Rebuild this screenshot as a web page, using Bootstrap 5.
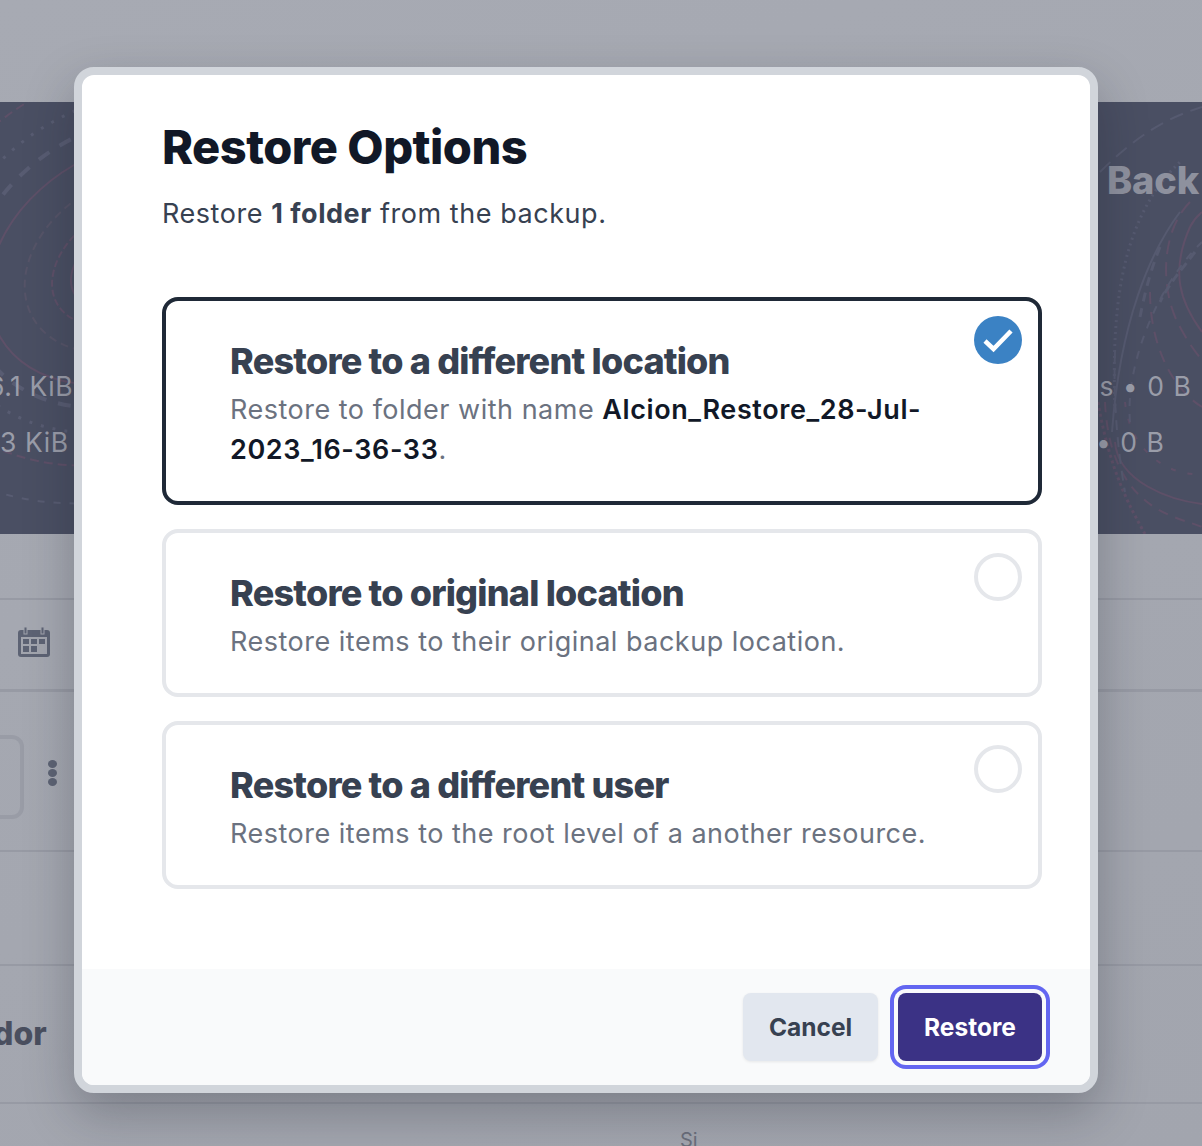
<!DOCTYPE html>
<html lang="en">
<head>
<meta charset="utf-8">
<title>Restore Options</title>
<link href="https://cdn.jsdelivr.net/npm/bootstrap@5.3.0/dist/css/bootstrap.min.css" rel="stylesheet">
<style>
html,body{height:100%;overflow:hidden}
body{font-family:Inter,"Liberation Sans",sans-serif;background:#a5a8b1;color:#374151;position:relative}
.page-bg{width:1202px;height:1146px;overflow:hidden;background:linear-gradient(160deg,#a7aab3,#a2a5ae)}
.page-top{height:102px}
.hero{height:432px;background:#4a4f63;position:relative;overflow:hidden;color:#9a9da9}
.hero-art{position:absolute;inset:0;width:100%;height:100%}
.hero-inner{position:relative;height:100%}
.hero-left{padding-top:256px;font-size:26.5px;letter-spacing:.6px;line-height:56px;width:74px}
.hero-left span{display:block;white-space:nowrap;margin-left:-12px}
.hero-left span+span{margin-left:0}
.hero-right{width:104px;font-size:26.5px;letter-spacing:1px;overflow:hidden;white-space:nowrap}
.hero-title{font-size:38px;font-weight:800;letter-spacing:-.2px;color:#8e919e;line-height:46px;margin:55px 0 0 9px}
.hero-right p{margin:0;line-height:56px}
.hero-right p.r1{margin-top:155px;margin-left:-6px}
.hero-right p.r2{margin-left:-2px}
.row-a{height:66px;border-bottom:2px solid #979aa4}
.row-b{height:92px;border-bottom:3px solid #979aa4;padding-left:18px;padding-top:27px}
.row-c{height:160px;border-bottom:2px solid #979aa4;padding-top:43px}
.ghost-box{width:24px;height:84px;border:4px solid #999ca6;border-left:0;border-radius:0 12px 12px 0}
.dots{margin:25px 0 0 24px}
.dots i{display:block;width:9px;height:8px;border-radius:50%;background:#5d6374;margin-bottom:1px}
.row-d{height:114px;border-bottom:2px solid #979aa4}
.row-e{height:138px;border-bottom:2px solid #979aa4;padding-top:46px;font-size:32px;font-weight:800;color:#4a4f5f;line-height:44px}
.row-e span{display:block;margin-left:-69px}
.ghost-foot{font-size:20px;color:#6b6f7c;padding:24px 0 0 680px;line-height:24px}

.restore-modal{position:absolute;left:74px;top:67px;width:1024px;height:1026px;border:8px solid #d1d5db;border-radius:20px;background:#fff;box-shadow:0 20px 50px rgba(20,24,36,.28);overflow:hidden;margin:0}
.m-body{padding:44px 48px 0 80px}
.m-title{font-size:47px;font-weight:800;color:#111827;letter-spacing:-.5px;line-height:56px;margin:0 0 17px}
.m-sub{font-size:27px;letter-spacing:.55px;line-height:44px;color:#374151;margin:0 0 61px}
.m-sub b{font-weight:700}
.opt{position:relative;border:4px solid #e5e7eb;border-radius:16px;padding:40px 64px 31px;background:#fff}
.opt.active{border-color:#1f2937}
.opt-name{font-size:36px;font-weight:800;color:#374151;letter-spacing:-.8px;line-height:40px;margin:0 0 9px}
.opt-desc{font-size:27px;letter-spacing:.5px;line-height:40px;color:#6b7280;margin:0}
.opt-desc b{font-weight:600;letter-spacing:.6px;color:#111827}
.radio-dot{position:absolute;top:20px;right:16px;width:48px;height:48px;border-radius:50%;border:4px solid #e5e7eb}
.radio-on{top:15px;border:0;background:#3b82c4;display:flex;align-items:center;justify-content:center}
.m-foot{position:absolute;left:0;right:0;bottom:0;height:116px;background:#f9fafb;padding:24px 48px 0 0}
.act{height:68px;border:0;border-radius:8px;font-size:24.5px;font-weight:700;line-height:68px;box-shadow:0 1px 3px rgba(0,0,0,.08)}
.act-cancel,.act-cancel:hover{width:135px;background:#e2e7ef;color:#374151}
.act-restore,.act-restore:hover{width:144px;background:#3b3285;color:#fff;box-shadow:0 0 0 4px #f9fafb,0 0 0 8px #6366f1}
</style>
</head>
<body>
<div class="page-bg">
  <div class="page-top"></div>
  <div class="hero d-flex justify-content-between">
    <svg class="hero-art" viewBox="0 0 1202 432" fill="none" aria-hidden="true">
      <g transform="rotate(-30 130 160)">
        <ellipse cx="130" cy="160" rx="64" ry="40" stroke="#5e5068" stroke-width="2"/>
        <ellipse cx="130" cy="160" rx="84" ry="56" stroke="#5e5068" stroke-width="2" stroke-dasharray="7 3"/>
        <ellipse cx="130" cy="160" rx="112" ry="82" stroke="#565468" stroke-width="2" stroke-dasharray="8 5"/>
        <ellipse cx="130" cy="160" rx="150" ry="112" stroke="#5e5068" stroke-width="2"/>
        <ellipse cx="130" cy="160" rx="172" ry="136" stroke="#585c72" stroke-width="4" stroke-dasharray="13 12"/>
        <ellipse cx="130" cy="160" rx="200" ry="160" stroke="#585c72" stroke-width="3" stroke-dasharray="3 9"/>
        <ellipse cx="130" cy="160" rx="240" ry="190" stroke="#5e5068" stroke-width="2" stroke-dasharray="9 5"/>
        <ellipse cx="130" cy="160" rx="285" ry="225" stroke="#585c72" stroke-width="2" stroke-dasharray="7 9"/>
      </g>
      <g stroke="#5e5068" stroke-width="2">
        <path d="M1202 230C1180 200 1170 170 1190 125 1195 115 1200 112 1202 110"/>
        <path d="M1190 100C1160 130 1160 190 1180 225 1188 240 1195 250 1202 258" stroke-dasharray="14 8"/>
        <path d="M1098 300C1110 370 1130 405 1145 432" stroke-width="3" stroke-dasharray="3 3"/>
        <path d="M1115 340C1118 380 1170 398 1202 402"/>
        <path d="M1105 300C1110 410 1180 415 1202 425" stroke-dasharray="10 8"/>
        <path d="M1150 190C1150 240 1170 285 1202 305" stroke-dasharray="12 8"/>
        <path d="M1125 300C1130 350 1170 375 1202 372" stroke-dasharray="5 12"/>
      </g>
      <g stroke="#565a70" stroke-width="2">
        <path d="M1115 310C1112 220 1116 120 1180 60" stroke-width="3" stroke-dasharray="2 4"/>
        <path d="M1180 110C1150 150 1120 220 1112 330"/>
        <path d="M1100 70C1140 30 1170 15 1202 5" stroke-dasharray="14 8"/>
        <path d="M1130 320C1125 260 1160 180 1202 140" stroke-dasharray="8 8"/>
        <path d="M1160 145C1150 170 1145 190 1140 215" stroke-width="3" stroke-dasharray="9 7"/>
        <path d="M1195 150C1180 170 1170 180 1160 200" stroke-width="3" stroke-dasharray="9 5"/>
        <path d="M1115 250C1113 300 1118 350 1125 390" stroke-dasharray="10 7"/>
      </g>
    </svg>
    <div class="hero-inner hero-left"><span>6.1 KiB</span><span>3 KiB</span></div>
    <div class="hero-inner hero-right">
      <div class="hero-title">Back</div>
      <p class="r1">ls&nbsp;•&nbsp;0 B</p>
      <p class="r2 text-start">•&nbsp;0 B</p>
    </div>
  </div>
  <div class="row-a"></div>
  <div class="row-b">
    <svg width="32" height="30" viewBox="0 0 32 30" aria-hidden="true"><rect y="3" width="32" height="27" rx="3" fill="#5d6374"/><rect x="6" y="0" width="3" height="7" fill="#5d6374" stroke="#a2a5ae"/><rect x="23" y="0" width="3" height="7" fill="#5d6374" stroke="#a2a5ae"/><rect x="3" y="10" width="26" height="17" fill="#a2a5ae"/><g fill="#5d6374"><rect x="5" y="12" width="6" height="5"/><rect x="13" y="12" width="6" height="5"/><rect x="21" y="12" width="6" height="5"/><rect x="5" y="19" width="6" height="6"/><rect x="13" y="19" width="6" height="6"/></g></svg>
  </div>
  <div class="row-c d-flex align-items-start">
    <div class="ghost-box"></div>
    <div class="dots"><i></i><i></i><i></i></div>
  </div>
  <div class="row-d"></div>
  <div class="row-e"><span>Vendor</span></div>
  <div class="ghost-foot">Si</div>
</div>

<div class="restore-modal" role="dialog" aria-modal="true">
  <div class="m-body">
    <h2 class="m-title">Restore Options</h2>
    <p class="m-sub">Restore <b>1 folder</b> from the backup.</p>
    <div class="d-flex flex-column gap-4">
      <div class="opt active">
        <h3 class="opt-name">Restore to a different location</h3>
        <p class="opt-desc">Restore to folder with name <b>Alcion_Restore_28-Jul-2023_16-36-33</b>.</p>
        <div class="radio-dot radio-on">
          <svg width="32" height="26" viewBox="0 0 32 26" fill="none" aria-hidden="true"><path d="M3 14 11.5 22 29 4" stroke="#fff" stroke-width="4.5"/></svg>
        </div>
      </div>
      <div class="opt">
        <h3 class="opt-name">Restore to original location</h3>
        <p class="opt-desc">Restore items to their original backup location.</p>
        <div class="radio-dot"></div>
      </div>
      <div class="opt">
        <h3 class="opt-name">Restore to a different user</h3>
        <p class="opt-desc">Restore items to the root level of a another resource.</p>
        <div class="radio-dot"></div>
      </div>
    </div>
  </div>
  <div class="m-foot d-flex justify-content-end gap-3">
    <button type="button" class="btn act act-cancel p-0">Cancel</button>
    <button type="button" class="btn act act-restore p-0 ms-1">Restore</button>
  </div>
</div>
<script src="https://cdn.jsdelivr.net/npm/bootstrap@5.3.0/dist/js/bootstrap.bundle.min.js"></script>
</body>
</html>
